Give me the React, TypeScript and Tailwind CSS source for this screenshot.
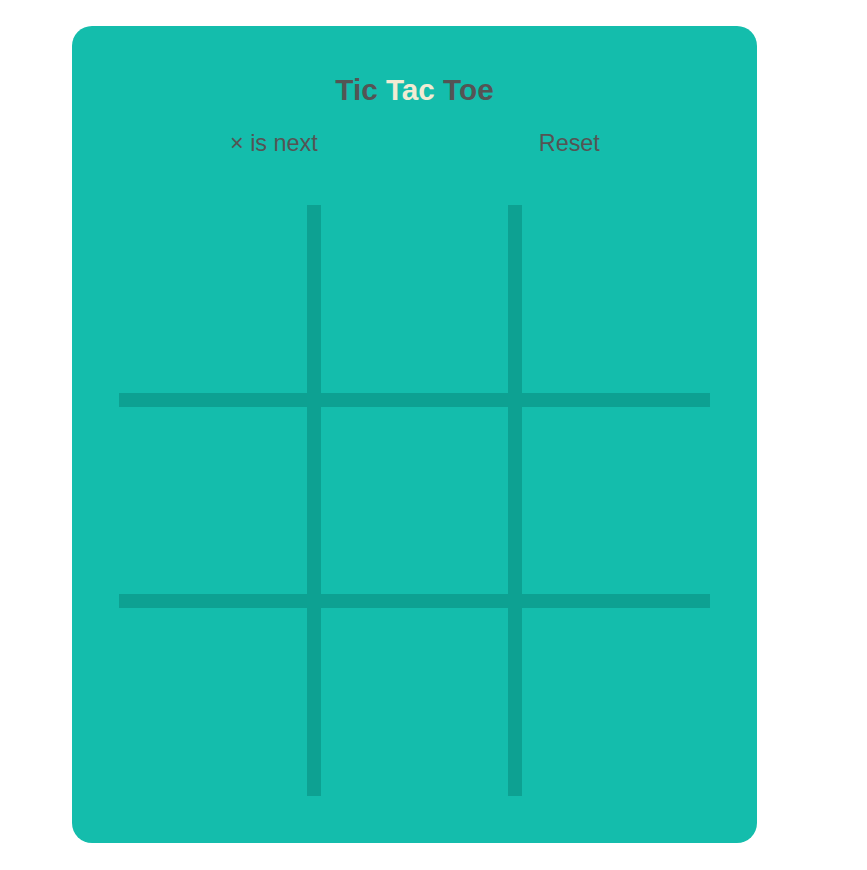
import React from "react";

export default function App() {
  const cells = Array.from({ length: 9 });
  return (
    <div className="w-[867px] h-[870px] bg-white" style={{ fontFamily: '"Liberation Sans", Arial, sans-serif' }}>
      <div className="pt-[26px] pl-[72px]">
        <div className="w-[685px] h-[817px] rounded-[20px] bg-[#14bdac] px-[47px] pt-[49px] flex flex-col">
          <h1 className="text-center font-bold text-[29.7px] leading-none text-[#545454]">
            Tic <span className="text-[#f2ebd3]">Tac</span> Toe
          </h1>
          <div className="mt-[27.5px] flex items-center text-[23.4px] leading-none text-[#545454] pl-[111px]">
            <span>× is next</span>
            <span className="ml-[221px]">Reset</span>
          </div>
          <div className="mt-[49.4px] grid grid-cols-[188px_187px_188px] grid-rows-[188px_187px_188px] gap-[14px] bg-[#0da192] w-[591px] h-[591px]">
            {cells.map((_, i) => (
              <div key={i} className="bg-[#14bdac]" />
            ))}
          </div>
        </div>
      </div>
    </div>
  );
}
